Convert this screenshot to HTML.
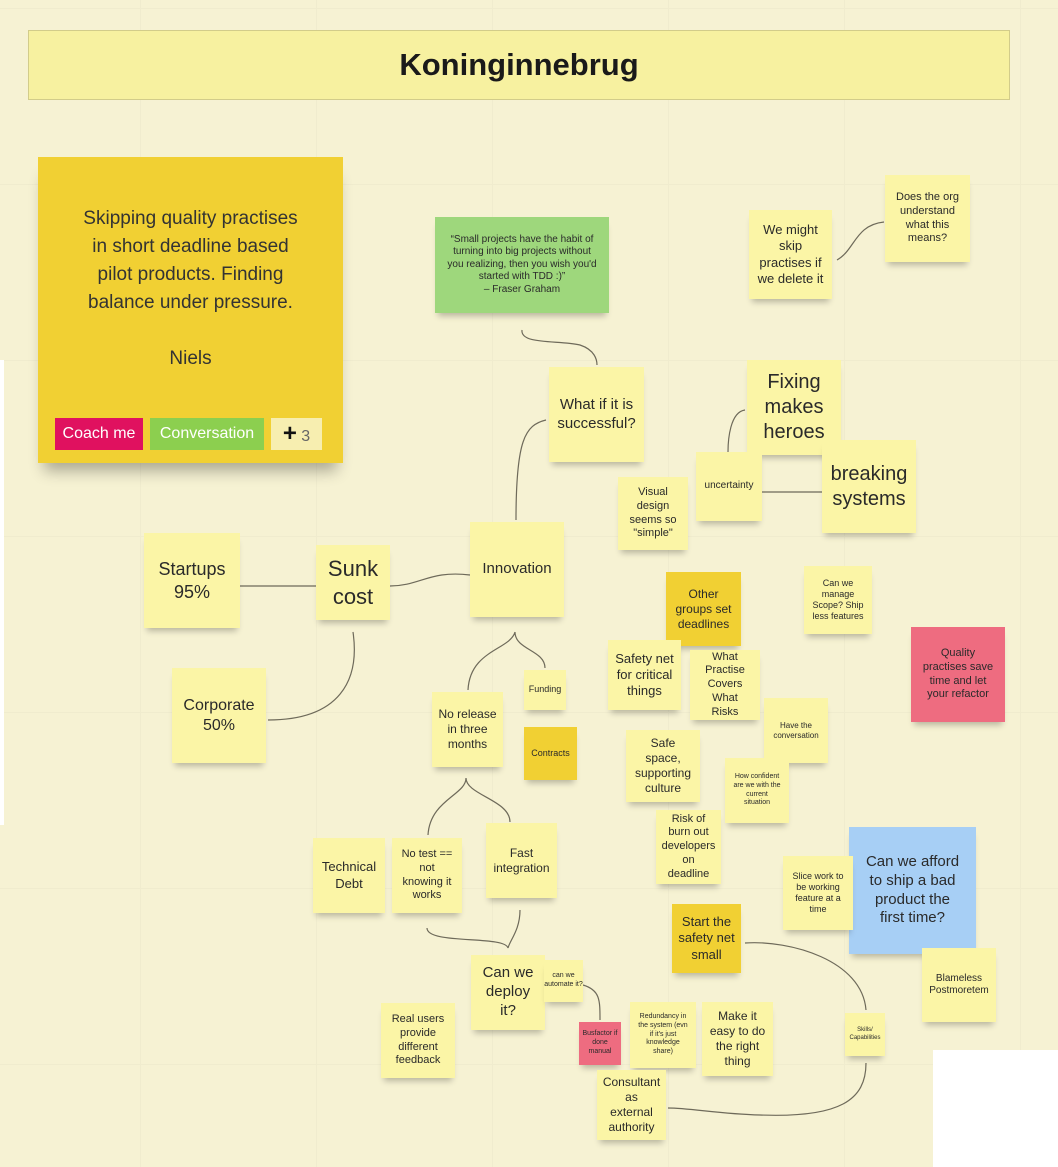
<!DOCTYPE html>
<html><head><meta charset="utf-8"><style>
html,body{margin:0;padding:0}
body{width:1058px;height:1167px;position:relative;overflow:hidden;background:#f6f2d3;font-family:"Liberation Sans","DejaVu Sans",sans-serif;color:#2a2a2a;
background-image:linear-gradient(#f0ecce 1px,transparent 1px),linear-gradient(90deg,#f0ecce 1px,transparent 1px);background-size:176px 176px;background-position:140px 8px}
.n{position:absolute;background:#fbf5a6;display:flex;align-items:center;justify-content:center;text-align:center;box-shadow:0 6px 6px -3px rgba(0,0,0,.25);line-height:1.25;box-sizing:border-box;padding:2px 6px}
.d{background:#f1d033}.p{background:#ee6c80}.g{background:#9ed77c}.b{background:#a7cff5}
svg{position:absolute;left:0;top:0}
</style></head><body>
<svg width="1058" height="1167" fill="none" stroke="#6e6a5a" stroke-width="1.2">
<path d="M522 330 C520 345 560 340 580 345 C595 350 597 360 597 365"/>
<path d="M546 420 C525 425 516 440 516 520"/>
<path d="M837 260 C855 250 855 225 884 222"/>
<path d="M745 410 C730 412 728 440 728 452"/>
<path d="M762 492 L822 492"/>
<path d="M240 586 L316 586"/>
<path d="M390 586 C420 586 430 570 470 575"/>
<path d="M353 632 C360 680 340 720 268 720"/>
<path d="M515 632 C510 650 470 650 468 690 M515 632 C515 650 545 650 545 668"/>
<path d="M466 778 C466 795 430 800 428 835 M466 778 C466 795 510 800 510 822"/>
<path d="M427 928 C427 945 505 935 508 948 C510 940 520 930 520 910"/>
<path d="M583 985 C600 990 600 1000 600 1020"/>
<path d="M745 943 C790 940 862 960 866 1010"/>
<path d="M866 1063 C866 1100 840 1118 760 1115 C720 1114 690 1108 668 1108"/>
</svg>
<div style="position:absolute;left:28px;top:30px;width:980px;height:68px;background:#f7f1a0;border:1px solid #d2cc8a;display:flex;align-items:center;justify-content:center;font-weight:bold;font-size:31px;color:#1a1a1a">Koninginnebrug</div>
<div style="position:absolute;left:0;top:360px;width:4px;height:465px;background:#fff"></div>
<div style="position:absolute;left:933px;top:1050px;width:125px;height:117px;background:#fff"></div>
<div class="n d" style="left:38px;top:157px;width:305px;height:306px;display:block;font-size:19px;line-height:28px;padding-top:48px;color:#333;box-shadow:0 14px 14px -6px rgba(0,0,0,.3)">Skipping quality practises<br>in short deadline based<br>pilot products. Finding<br>balance under pressure.<br><br>Niels
<div style="position:absolute;left:17px;top:261px;width:88px;height:32px;background:#e0115f;color:#fff;font-size:16px;line-height:32px">Coach me</div>
<div style="position:absolute;left:112px;top:261px;width:114px;height:32px;background:#8ccf4f;color:#fff;font-size:16px;line-height:32px">Conversation</div>
<div style="position:absolute;left:233px;top:261px;width:51px;height:32px;background:#f7eeb0;color:#666;font-size:16px;line-height:32px"><b style="color:#111;font-size:24px">+</b> 3</div>
</div>
<div class="n g" style="left:435px;top:217px;width:174px;height:96px;font-size:10px;padding:0 10px">“Small projects have the habit of turning into big projects without you realizing, then you wish you'd started with TDD :)”<br>– Fraser Graham</div>
<div class="n" style="left:749px;top:210px;width:83px;height:89px;font-size:13px">We might skip practises if we delete it</div>
<div class="n" style="left:885px;top:175px;width:85px;height:87px;font-size:11px">Does the org understand what this means?</div>
<div class="n" style="left:549px;top:367px;width:95px;height:95px;font-size:15px;padding:0 10px">What if it is successful?</div>
<div class="n" style="left:747px;top:360px;width:94px;height:95px;font-size:20px">Fixing makes heroes</div>
<div class="n" style="left:618px;top:477px;width:70px;height:73px;font-size:11px">Visual design seems so "simple"</div>
<div class="n" style="left:696px;top:452px;width:66px;height:69px;font-size:10px">uncertainty</div>
<div class="n" style="left:822px;top:440px;width:94px;height:93px;font-size:20px">breaking systems</div>
<div class="n" style="left:144px;top:533px;width:96px;height:95px;font-size:18px">Startups 95%</div>
<div class="n" style="left:316px;top:545px;width:74px;height:75px;font-size:22px">Sunk cost</div>
<div class="n" style="left:470px;top:522px;width:94px;height:95px;font-size:15px">Innovation</div>
<div class="n d" style="left:666px;top:572px;width:75px;height:74px;font-size:12px;padding:0 9px">Other groups set deadlines</div>
<div class="n" style="left:804px;top:566px;width:68px;height:68px;font-size:9px">Can we manage Scope? Ship less features</div>
<div class="n p" style="left:911px;top:627px;width:94px;height:95px;font-size:11px;padding:0 10px">Quality practises save time and let your refactor</div>
<div class="n" style="left:608px;top:640px;width:73px;height:70px;font-size:13px">Safety net for critical things</div>
<div class="n" style="left:690px;top:650px;width:70px;height:70px;font-size:11px;padding:0 9px">What Practise Covers What Risks</div>
<div class="n" style="left:524px;top:670px;width:42px;height:40px;font-size:9px;padding:0">Funding</div>
<div class="n" style="left:172px;top:668px;width:94px;height:95px;font-size:16px">Corporate 50%</div>
<div class="n" style="left:432px;top:692px;width:71px;height:75px;font-size:12px">No release in three months</div>
<div class="n d" style="left:524px;top:727px;width:53px;height:53px;font-size:9px;padding:0">Contracts</div>
<div class="n" style="left:764px;top:698px;width:64px;height:65px;font-size:8px">Have the conversation</div>
<div class="n" style="left:626px;top:730px;width:74px;height:72px;font-size:12px">Safe space, supporting culture</div>
<div class="n" style="left:725px;top:758px;width:64px;height:65px;font-size:7px;padding:0 8px">How confident are we with the current situation</div>
<div class="n" style="left:656px;top:810px;width:65px;height:74px;font-size:11px">Risk of burn out developers on deadline</div>
<div class="n" style="left:313px;top:838px;width:72px;height:75px;font-size:13px">Technical Debt</div>
<div class="n" style="left:392px;top:838px;width:70px;height:75px;font-size:11px;padding:0 9px">No test == not knowing it works</div>
<div class="n" style="left:486px;top:823px;width:71px;height:75px;font-size:12px">Fast integration</div>
<div class="n b" style="left:849px;top:827px;width:127px;height:127px;font-size:15px;padding:0 12px">Can we afford to ship a bad product the first time?</div>
<div class="n" style="left:783px;top:856px;width:70px;height:74px;font-size:9px;padding:0 7px">Slice work to be working feature at a time</div>
<div class="n d" style="left:672px;top:904px;width:69px;height:69px;font-size:13px">Start the safety net small</div>
<div class="n" style="left:922px;top:948px;width:74px;height:74px;font-size:10px">Blameless Postmoretem</div>
<div class="n" style="left:471px;top:955px;width:74px;height:75px;font-size:15px;padding:0 8px">Can we deploy it?</div>
<div class="n" style="left:544px;top:960px;width:39px;height:42px;font-size:7px;padding:0">can we automate it?</div>
<div class="n" style="left:381px;top:1003px;width:74px;height:75px;font-size:11px">Real users provide different feedback</div>
<div class="n p" style="left:579px;top:1022px;width:42px;height:43px;font-size:7px;padding:0 3px">Busfactor if done manual</div>
<div class="n" style="left:630px;top:1002px;width:66px;height:66px;font-size:7px">Redundancy in the system (evn if it's just knowledge share)</div>
<div class="n" style="left:702px;top:1002px;width:71px;height:74px;font-size:12px">Make it easy to do the right thing</div>
<div class="n" style="left:845px;top:1013px;width:40px;height:43px;font-size:6px;padding:0">Skills/ Capabilities</div>
<div class="n" style="left:597px;top:1070px;width:69px;height:70px;font-size:12px">Consultant as external authority</div>
</body></html>
